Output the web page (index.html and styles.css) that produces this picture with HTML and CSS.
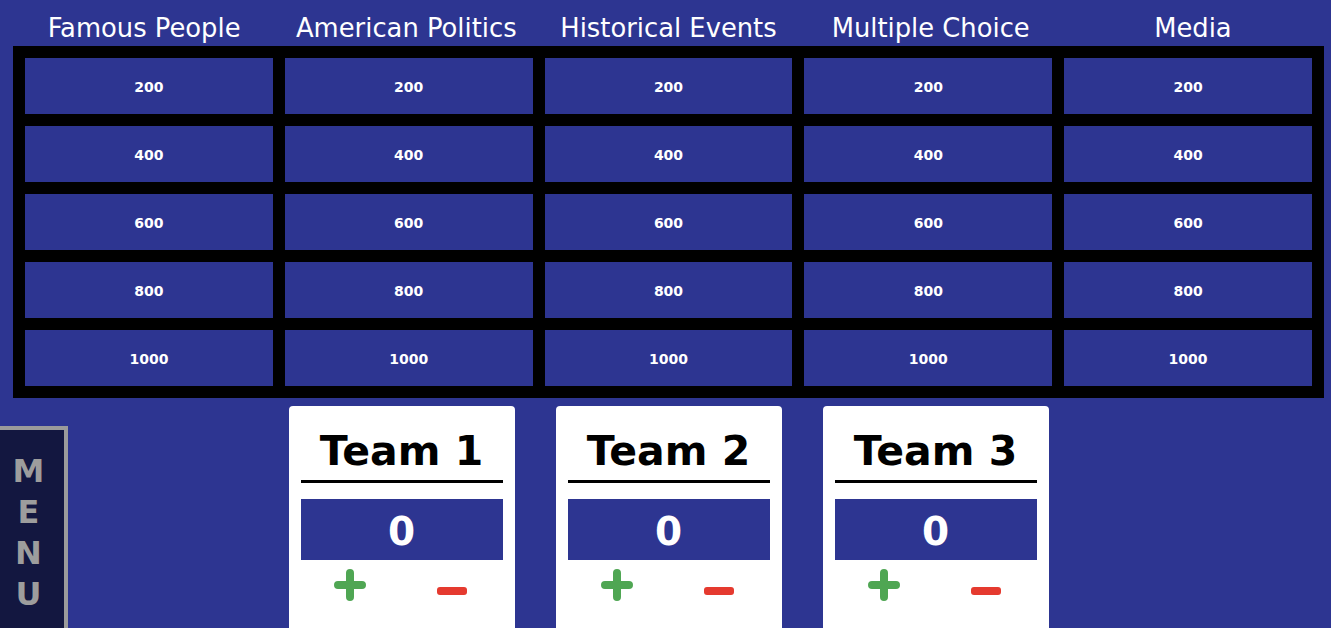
FILE: index.html
```html
<!DOCTYPE html>
<html>
<head>
<meta charset="utf-8">
<link rel="stylesheet" href="styles.css">
</head>
<body>
<div class="page">
  <div class="headers">
    <div class="cat">Famous People</div>
    <div class="cat">American Politics</div>
    <div class="cat">Historical Events</div>
    <div class="cat">Multiple Choice</div>
    <div class="cat">Media</div>
  </div>
  <div class="board">
    <div class="cell">200</div><div class="cell">200</div><div class="cell">200</div><div class="cell">200</div><div class="cell">200</div>
    <div class="cell">400</div><div class="cell">400</div><div class="cell">400</div><div class="cell">400</div><div class="cell">400</div>
    <div class="cell">600</div><div class="cell">600</div><div class="cell">600</div><div class="cell">600</div><div class="cell">600</div>
    <div class="cell">800</div><div class="cell">800</div><div class="cell">800</div><div class="cell">800</div><div class="cell">800</div>
    <div class="cell">1000</div><div class="cell">1000</div><div class="cell">1000</div><div class="cell">1000</div><div class="cell">1000</div>
  </div>
  <div class="teams">
    <div class="team">
      <div class="team-name">Team 1</div>
      <div class="score">0</div>
      <div class="controls">
        <div class="ctl"><svg class="plus" width="32" height="32" viewBox="0 0 32 32"><path d="M16 4V28M4 16H28" stroke="#4fa653" stroke-width="8" stroke-linecap="round"/></svg></div>
        <div class="ctl"><svg class="minus" width="30" height="8" viewBox="0 0 30 8"><rect x="0" y="0" width="30" height="8" rx="3" fill="#e53a2f"/></svg></div>
      </div>
    </div>
    <div class="team">
      <div class="team-name">Team 2</div>
      <div class="score">0</div>
      <div class="controls">
        <div class="ctl"><svg class="plus" width="32" height="32" viewBox="0 0 32 32"><path d="M16 4V28M4 16H28" stroke="#4fa653" stroke-width="8" stroke-linecap="round"/></svg></div>
        <div class="ctl"><svg class="minus" width="30" height="8" viewBox="0 0 30 8"><rect x="0" y="0" width="30" height="8" rx="3" fill="#e53a2f"/></svg></div>
      </div>
    </div>
    <div class="team">
      <div class="team-name">Team 3</div>
      <div class="score">0</div>
      <div class="controls">
        <div class="ctl"><svg class="plus" width="32" height="32" viewBox="0 0 32 32"><path d="M16 4V28M4 16H28" stroke="#4fa653" stroke-width="8" stroke-linecap="round"/></svg></div>
        <div class="ctl"><svg class="minus" width="30" height="8" viewBox="0 0 30 8"><rect x="0" y="0" width="30" height="8" rx="3" fill="#e53a2f"/></svg></div>
      </div>
    </div>
  </div>
</div>
<div class="menu">
  <span>M</span><span>E</span><span>N</span><span>U</span>
</div>
</body>
</html>
```

FILE: styles.css
```css
html, body {
  margin: 0;
  padding: 0;
  height: 628px;
  overflow: hidden;
  background: #2d3591;
  font-family: "DejaVu Sans", Verdana, sans-serif;
}

.page {
  width: 1311px;
  margin-left: 13px;
  padding-top: 13px;
}

.headers {
  display: grid;
  grid-template-columns: repeat(5, 1fr);
  height: 30px;
  margin-bottom: 3px;
}

.cat {
  color: #ffffff;
  font-size: 25.8px;
  line-height: 30px;
  text-align: center;
  white-space: nowrap;
}

.board {
  background: #000;
  padding: 12px;
  display: grid;
  grid-template-columns: repeat(5, 1fr);
  grid-auto-rows: 56px;
  gap: 12px;
  height: 328px;
}

.cell {
  background: #2d3591;
  color: #fff;
  font-weight: bold;
  font-size: 14px;
  padding-top: 2px;
  box-sizing: border-box;
  display: flex;
  align-items: center;
  justify-content: center;
}

.teams {
  display: flex;
  justify-content: center;
  gap: 41px;
  margin-top: 8px;
}

.team {
  width: 226px;
  height: 222px;
  background: #fff;
  border-radius: 4px 4px 0 0;
  padding: 22px 12px 0;
  box-sizing: border-box;
}

.team-name {
  font-size: 41px;
  font-weight: bold;
  color: #000;
  text-align: center;
  line-height: 47px;
  padding-bottom: 5px;
  border-bottom: 3px solid #000;
}

.score {
  margin-top: 16px;
  height: 61px;
  padding-top: 3px;
  box-sizing: border-box;
  background: #2d3591;
  color: #fff;
  font-size: 39px;
  font-weight: bold;
  display: flex;
  align-items: center;
  justify-content: center;
}

.controls {
  display: flex;
  height: 50px;
}

.ctl {
  flex: 1;
  display: flex;
  justify-content: center;
  align-items: flex-start;
}

.plus {
  margin-top: 9px;
  margin-left: -2px;
}

.minus {
  margin-top: 27px;
}

.menu {
  position: absolute;
  left: 0;
  top: 426px;
  width: 57px;
  height: 177px;
  background: #131740;
  border-top: 4px solid #9b9b9b;
  border-right: 4px solid #9b9b9b;
  padding-top: 21px;
  padding-right: 7px;
  box-sizing: content-box;
  display: flex;
  flex-direction: column;
  align-items: center;
  overflow: hidden;
}

.menu span {
  color: #9d9d9d;
  font-weight: bold;
  font-size: 32px;
  line-height: 41px;
  display: block;
}
```
